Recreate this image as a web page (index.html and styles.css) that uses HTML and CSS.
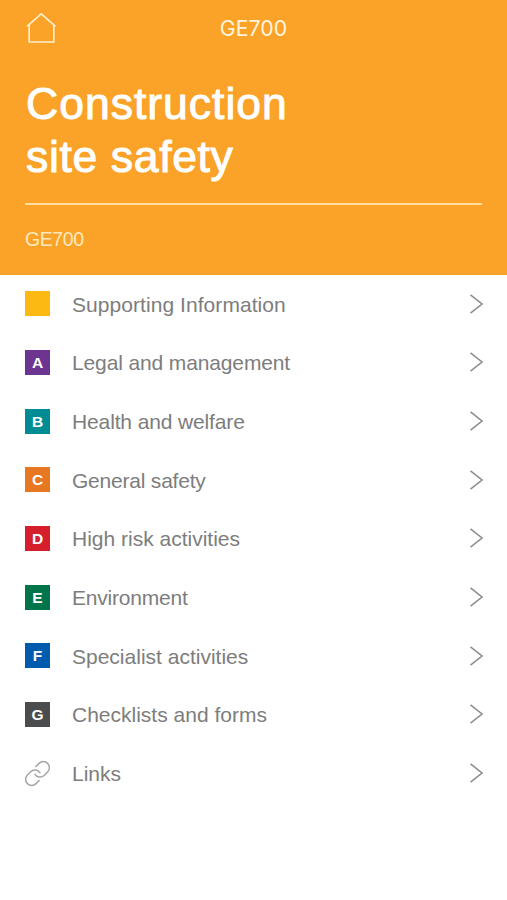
FILE: index.html
```html
<!DOCTYPE html>
<html lang="en">
<head>
<meta charset="utf-8">
<title>GE700</title>
<link rel="stylesheet" href="styles.css">
</head>
<body>
<svg class="defs" width="0" height="0" aria-hidden="true">
  <symbol id="chevron" viewBox="0 0 14 20"><path d="M1.5 .8 13 10 1.5 19.2"/></symbol>
</svg>
<header class="header">
  <nav class="nav">
    <a class="home" aria-label="Home">
      <svg width="32" height="32" viewBox="0 0 32 32"><path d="M2 14.4 16.2 1.9 30.4 14.4M4.2 13V30H28.8V13"/></svg>
    </a>
    <span class="nav-title">GE700</span>
  </nav>
  <h1 class="title">Construction<br><span class="second">site safety</span></h1>
  <p class="subtitle">GE700</p>
</header>
<ul class="list">
  <li class="row"><span class="badge yellow"></span><span class="label wide">Supporting Information</span><svg class="chevron"><use href="#chevron"/></svg></li>
  <li class="row"><span class="badge purple">A</span><span class="label tight">Legal and management</span><svg class="chevron"><use href="#chevron"/></svg></li>
  <li class="row"><span class="badge teal">B</span><span class="label tight">Health and welfare</span><svg class="chevron"><use href="#chevron"/></svg></li>
  <li class="row"><span class="badge orange">C</span><span class="label tighter">General safety</span><svg class="chevron"><use href="#chevron"/></svg></li>
  <li class="row"><span class="badge red">D</span><span class="label">High risk activities</span><svg class="chevron"><use href="#chevron"/></svg></li>
  <li class="row"><span class="badge green">E</span><span class="label tighter">Environment</span><svg class="chevron"><use href="#chevron"/></svg></li>
  <li class="row"><span class="badge blue">F</span><span class="label">Specialist activities</span><svg class="chevron"><use href="#chevron"/></svg></li>
  <li class="row"><span class="badge grey">G</span><span class="label">Checklists and forms</span><svg class="chevron"><use href="#chevron"/></svg></li>
  <li class="row">
    <svg class="link" viewBox="-12.5 -12.5 25 25"><g transform="rotate(-45)"><path d="M3.2-6.1H8.2A6.1 6.1 0 0 1 8.2 6.1H3.6A6.1 6.1 0 0 1-2.2-1.8M-3.2 6.1H-8.2A6.1 6.1 0 0 1-8.2-6.1H-3.6A6.1 6.1 0 0 1 2.2 1.8"/></g></svg>
    <span class="label">Links</span><svg class="chevron"><use href="#chevron"/></svg>
  </li>
</ul>
</body>
</html>
```
FILE: styles.css
```css
* { box-sizing: border-box; }
body {
  margin: 0;
  background: #fff;
  font-family: "Liberation Sans", Arial, sans-serif;
}
.defs { display: block; }
svg { fill: none; overflow: visible; }
.header {
  height: 274.5px;
  padding: 0 25px;
  background: #fba228;
  color: #fff;
}
.nav {
  display: grid;
  grid-template-columns: 60px 1fr 60px;
  align-items: center;
  height: 56px;
}
.home { display: block; height: 32px; stroke: #fff0cf; stroke-width: 1.6; }
.nav-title {
  text-align: center;
  font: 21.3px/24px Inter, sans-serif;
  color: #fff5df;
}
.title {
  margin: 0;
  height: 149px;
  padding: 22px 0 0 1px;
  border-bottom: 2px solid #ffdf9f;
  font-size: 44.5px;
  font-weight: 400;
  line-height: 52.5px;
  letter-spacing: 1px;
  -webkit-text-stroke: 1px #fff;
}
.second { letter-spacing: .65px; }
.subtitle {
  margin: 22px 0 0;
  font-size: 19.5px;
  line-height: 24px;
  letter-spacing: -.4px;
  color: #ffe9bd;
}
.list { list-style: none; margin: 0; padding: 0 24px 0 25px; }
.row { display: flex; align-items: center; height: 58.67px; }
.badge, .link { flex: none; width: 25px; height: 25px; margin-right: 22px; }
.badge {
  color: #fff;
  font-size: 15.5px;
  font-weight: 700;
  line-height: 25px;
  text-align: center;
}
.link { stroke: #a5a5a5; stroke-width: 1.5; }
.label { flex: 1; font-size: 21px; line-height: 26px; color: #7d7d7d; padding-top: 2px; }
.wide { letter-spacing: .06px; }
.tight { letter-spacing: -.13px; }
.tighter { letter-spacing: -.21px; }
.chevron { width: 14px; height: 20px; stroke: #8c8c8c; stroke-width: 1.5; }
.yellow { background: #fdb913; }
.purple { background: #6d3590; }
.teal { background: #008c95; }
.orange { background: #e87722; }
.red { background: #d51f2d; }
.green { background: #007549; }
.blue { background: #005bae; }
.grey { background: #4b4c4e; }
```
